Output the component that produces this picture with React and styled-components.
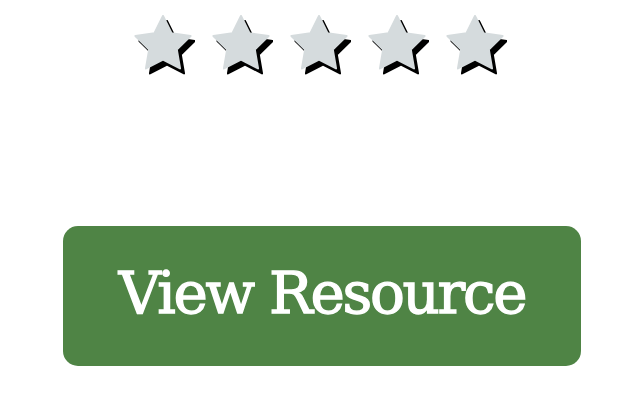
import React from "react"
import styled, { createGlobalStyle } from "styled-components"

const GlobalStyle = createGlobalStyle`
  html, body {
    margin: 0;
    padding: 0;
    background: #ffffff;
  }
`

const R = 29
const r = R * 0.5
const starPoints = Array.from({ length: 10 }, (_, i) => {
  const rad = i % 2 === 0 ? R : r
  const a = (Math.PI / 5) * i - Math.PI / 2
  return `${(30 + rad * Math.cos(a)).toFixed(2)},${(30 + rad * Math.sin(a)).toFixed(2)}`
}).join(" ")

function Star() {
  return (
    <StarIcon viewBox="0 0 62 62" width="62" height="62">
      <polygon points={starPoints} fill="#000000" stroke="#000000" strokeWidth="2" strokeLinejoin="round" transform="translate(4 5)" />
      <polygon points={starPoints} fill="#d5dbdd" stroke="#d5dbdd" strokeWidth="2" strokeLinejoin="round" />
    </StarIcon>
  )
}

function App() {
  return (
    <>
      <GlobalStyle />
      <Page>
        <Stars>
          {[0, 1, 2, 3, 4].map(i => <Star key={i} />)}
        </Stars>
        <ResourceButton type="button">View Resource</ResourceButton>
      </Page>
    </>
  )
}

const Page = styled.div`
  display: flex;
  flex-direction: column;
  padding: 15px 59px 0 63px;
  width: 640px;
  height: 400px;
  box-sizing: border-box;
`

const Stars = styled.div`
  display: flex;
  justify-content: center;
  gap: 16px;
  padding-right: 5px;
`

const StarIcon = styled.svg`
  display: block;
`

const ResourceButton = styled.button`
  margin-top: 149px;
  width: 100%;
  height: 140px;
  border: none;
  border-radius: 15px;
  background-color: #4f8445;
  color: #ffffff;
  font-family: "DejaVu Serif", serif;
  font-size: 58px;
  letter-spacing: -2.3px;
  -webkit-text-stroke: 1.3px #ffffff;
  display: flex;
  align-items: center;
  justify-content: center;
  padding: 0 0 6px 0;
  cursor: pointer;
`

export default App
